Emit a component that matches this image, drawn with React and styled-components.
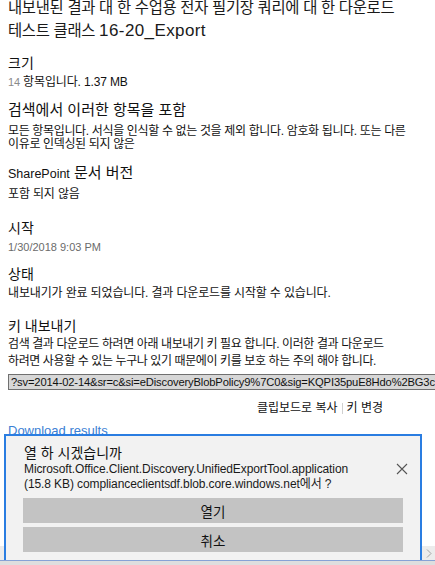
import styled, { createGlobalStyle } from "styled-components";

const GlobalStyle = createGlobalStyle`
  html, body {
    margin: 0;
    padding: 0;
    background: #ffffff;
    overflow: hidden;
  }
  body {
    font-family: "Liberation Sans", "Noto Sans CJK KR", sans-serif;
    color: #111;
  }
`;

const Page = styled.div`
  height: 565px;
  padding: 0 8px;
  display: flex;
  flex-direction: column;
  overflow: hidden;
`;

const Title = styled.h1`
  margin: -4px 0 0;
  font-size: 15.4px;
  font-weight: 400;
  line-height: 23px;
  letter-spacing: -0.3px;
  white-space: nowrap;
  color: #1a1a1a;
`;

const Word = styled.span`
  font-size: ${(p) => p.$size}px;
  letter-spacing: ${(p) => p.$track || 0}px;
`;

const Section = styled.section`
  display: flex;
  flex-direction: column;
  margin-top: ${(p) => p.$top || 0}px;
`;

const Heading = styled.h2`
  margin: 0;
  font-size: ${(p) => p.$size || 14}px;
  font-weight: 400;
  line-height: 20px;
  white-space: nowrap;
  color: #111;
`;

const Value = styled.p`
  margin: ${(p) => p.$gap || 0}px 0 0;
  font-size: ${(p) => (p.$muted ? 11 : 12)}px;
  line-height: ${(p) => p.$lh || 18}px;
  letter-spacing: ${(p) => (p.$track !== undefined ? p.$track : p.$muted ? 0 : -0.15)}px;
  color: ${(p) => (p.$muted ? "#6b6b6b" : "#111")};
  white-space: nowrap;
`;

const Count = styled.span`
  color: #8a8a8a;
  font-size: 11px;
`;

const KeyField = styled.div`
  margin-top: 4px;
  width: 440px;
  height: 16px;
  box-sizing: border-box;
  border: 1px solid #707070;
  border-right: none;
  background: #d7d7d7;
  padding: 0 2px;
  font-size: 11.2px;
  line-height: 14px;
  letter-spacing: -0.15px;
  white-space: nowrap;
  overflow: hidden;
  color: #111;
`;

const LinkRow = styled.div`
  margin-top: 9px;
  width: 375px;
  display: flex;
  justify-content: flex-end;
  align-items: center;
  gap: 4px;
  font-size: 12px;
  line-height: 18px;
  color: #111;
`;

const Divider = styled.span`
  width: 1px;
  height: 11px;
  background: #d0d0d0;
`;

const DownloadLink = styled.a`
  margin-top: 5px;
  font-size: 13px;
  line-height: 18px;
  color: #3b80d4;
  text-decoration: none;
`;

/* download prompt pinned to the bottom of the window */
const Prompt = styled.div`
  position: fixed;
  left: 4px;
  top: 434px;
  width: 418px;
  height: 126px;
  box-sizing: border-box;
  background: #f2f2f2;
  border: 2px solid #2a7de1;
  border-bottom: none;
  padding: 9px 17px 0 17px;
  display: flex;
  flex-direction: column;
`;

const PromptHeader = styled.div`
  display: flex;
  align-items: center;
  margin-right: -6px;
`;

const PromptText = styled.div`
  flex: 1;
  padding-left: 1px;
`;

const Question = styled.div`
  font-size: 14px;
  line-height: 17px;
  color: #111;
`;

const FileLine = styled.div`
  font-size: 12px;
  line-height: 15px;
  letter-spacing: -0.1px;
  color: #1a1a1a;
  white-space: nowrap;
`;

const Close = styled.button`
  width: 14px;
  height: 14px;
  padding: 0;
  border: none;
  background: none;
  display: flex;
  align-items: center;
  justify-content: center;
`;

const Actions = styled.div`
  margin-top: 6px;
  display: flex;
  flex-direction: column;
  gap: 4px;
`;

const ActionButton = styled.button`
  height: 25px;
  border: none;
  background: #c3c3c3;
  font-family: inherit;
  font-size: 13.5px;
  color: #111;
  padding: 0;
`;

const ScrollTrack = styled.div`
  position: fixed;
  left: 0;
  right: 0;
  bottom: 5px;
  height: 14px;
  background: #ececec;
  display: flex;
  justify-content: flex-end;
  align-items: center;
  padding-right: 3px;
`;

const WindowEdge = styled.div`
  position: fixed;
  left: 0;
  right: 0;
  bottom: 0;
  height: 4px;
  border-top: 1px solid #86a2d6;
  background: #dedede;
`;

const CloseIcon = () => (
  <svg width="12" height="12" viewBox="0 0 12 12">
    <path d="M1 1 L11 11 M11 1 L1 11" stroke="#555" strokeWidth="1.1" fill="none" />
  </svg>
);

const ArrowRight = () => (
  <svg width="6" height="9" viewBox="0 0 6 9">
    <path d="M1 0.5 L5 4.5 L1 8.5" stroke="#a3a3a3" strokeWidth="1" fill="none" />
  </svg>
);

export default function App() {
  return (
    <>
      <GlobalStyle />
      <Page>
        <Title>
          내보낸된 결과 대 한 수업용 전자 필기장 쿼리에 대 한 다운로드
          <br />
          테스트 클래스 <Word $size={17} $track={0.4}>16-20_Export</Word>
        </Title>

        <Section $top={11}>
          <Heading>크기</Heading>
          <Value>
            <Count>14</Count> 항목입니다. 1.37 MB
          </Value>
        </Section>

        <Section $top={9}>
          <Heading $size={15}>검색에서 이러한 항목을 포함</Heading>
          <Value $gap={5} $lh={13} $track={-0.35}>
            모든 항목입니다. 서식을 인식할 수 없는 것을 제외 합니다. 암호화 됩니다. 또는 다른
            <br />
            이유로 인덱싱된 되지 않은
          </Value>
        </Section>

        <Section $top={12}>
          <Heading $size={15}>
            <Word $size={12.5}>SharePoint</Word> 문서 버전
          </Heading>
          <Value $gap={1}>포함 되지 않음</Value>
        </Section>

        <Section $top={15}>
          <Heading>시작</Heading>
          <Value $muted>1/30/2018 9:03 PM</Value>
        </Section>

        <Section $top={8}>
          <Heading>상태</Heading>
          <Value>내보내기가 완료 되었습니다. 결과 다운로드를 시작할 수 있습니다.</Value>
        </Section>

        <Section $top={14}>
          <Heading>키 내보내기</Heading>
          <Value $lh={17} $track={-0.4}>
            검색 결과 다운로드 하려면 아래 내보내기 키 필요 합니다. 이러한 결과 다운로드
            <br />
            하려면 사용할 수 있는 누구나 있기 때문에이 키를 보호 하는 주의 해야 합니다.
          </Value>
        </Section>

        <KeyField>?sv=2014-02-14&amp;sr=c&amp;si=eDiscoveryBlobPolicy9%7C0&amp;sig=KQPI35puE8Hdo%2BG3cT</KeyField>

        <LinkRow>
          <span>클립보드로 복사</span>
          <Divider />
          <span>키 변경</span>
        </LinkRow>

        <DownloadLink href="#">Download results</DownloadLink>
      </Page>

      <ScrollTrack>
        <ArrowRight />
      </ScrollTrack>
      <WindowEdge />

      <Prompt>
        <PromptHeader>
          <PromptText>
            <Question>열 하 시겠습니까</Question>
            <FileLine>Microsoft.Office.Client.Discovery.UnifiedExportTool.application</FileLine>
            <FileLine>(15.8 KB) complianceclientsdf.blob.core.windows.net에서 ?</FileLine>
          </PromptText>
          <Close aria-label="닫기">
            <CloseIcon />
          </Close>
        </PromptHeader>
        <Actions>
          <ActionButton>열기</ActionButton>
          <ActionButton>취소</ActionButton>
        </Actions>
      </Prompt>
    </>
  );
}
